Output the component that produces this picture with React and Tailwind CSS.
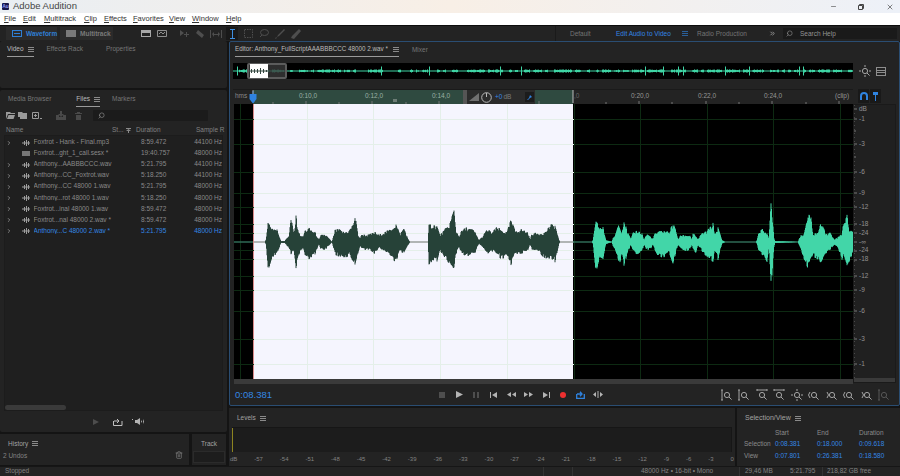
import React from "react";
import { X, Minus, Search, ChevronRight, ChevronsRight, Trash2 } from "lucide-react";

const uiFont = "font-['Liberation_Sans',Arial,sans-serif]";

// keypoints read off the reference: [x, up, down]
const selectedClip = [
  [265, 0, 0], [266, 3, 3], [268, 21, 28], [272, 15, 17], [277, 13, 13], [281, 1, 1], [285, 1, 1], [286, 3, 3], [289, 7, 7], [291, 25, 12], [294, 8, 8], [296, 26, 28], [299, 9, 14], [303, 5, 5],
  [305, 12, 15], [309, 14, 17], [315, 10, 13], [319, 2, 2], [321, 7, 8], [324, 8, 9], [327, 6, 6], [332, 0, 0], [335, 12, 13], [339, 13, 15], [344, 10, 18], [349, 12, 13], [353, 18, 20], [355, 28, 26], [358, 8, 13], [360, 4, 4],
  [362, 8, 7], [367, 7, 8], [370, 8, 9], [375, 10, 12], [379, 7, 6], [382, 9, 9], [389, 12, 13], [396, 19, 21], [400, 8, 10], [404, 15, 12], [408, 3, 3], [410, 0, 0],
  [428, 0, 0], [429, 18, 23], [432, 18, 20], [437, 17, 20], [440, 7, 8], [445, 13, 17], [449, 17, 22], [454, 34, 28], [456, 12, 12], [459, 6, 6], [462, 12, 12], [467, 15, 15], [474, 12, 13], [479, 2, 2],
  [483, 6, 5], [487, 13, 13], [492, 10, 9], [497, 15, 13], [502, 12, 18], [507, 10, 15], [511, 23, 24], [515, 12, 13], [522, 13, 12], [528, 10, 9], [530, 2, 2], [532, 9, 8], [539, 9, 9], [545, 10, 19], [550, 17, 17], [555, 18, 20], [559, 2, 2], [560, 0, 0],
];

const idleClip = [
  [592, 0, 0], [593, 2, 2], [596, 21, 31], [600, 15, 17], [603, 15, 17], [606, 2, 2], [612, 0, 0], [613, 4, 4], [615, 7, 7], [619, 21, 23], [622, 10, 14], [624, 24, 27], [627, 11, 12], [631, 3, 3],
  [633, 9, 10], [637, 12, 13], [642, 9, 10], [644, 2, 2], [646, 7, 7], [648, 8, 8], [651, 5, 7], [653, 3, 3], [655, 9, 8], [658, 10, 15], [662, 12, 17], [667, 11, 12], [669, 10, 10], [673, 19, 22], [676, 12, 10], [678, 3, 3],
  [681, 7, 8], [685, 7, 9], [690, 7, 8], [692, 2, 2], [693, 10, 8], [696, 5, 12], [698, 3, 3], [702, 9, 9], [707, 11, 17], [713, 19, 20], [715, 8, 8], [718, 15, 18], [722, 2, 2], [725, 0, 0],
  [756, 0, 0], [757, 2, 2], [759, 11, 10], [763, 13, 15], [767, 10, 23], [769, 3, 3], [771, 41, 47], [774, 5, 5], [775, 1, 1], [798, 0, 0], [799, 3, 3], [801, 8, 8], [803, 5, 15], [808, 28, 27], [811, 25, 20], [813, 8, 15], [818, 10, 18], [822, 22, 23], [826, 8, 12], [830, 10, 8], [834, 3, 3],
  [837, 4, 4], [842, 9, 18], [843, 19, 15], [847, 27, 26], [849, 14, 20], [853, 10, 10],
];

function noise(i) {
  const s = Math.sin(i * 12.9898) * 43758.5453;
  return s - Math.floor(s);
}

// one vertical stroke per half pixel, interpolating the keypoints
function wavePath(points) {
  let d = "";
  for (let p = 0; p < points.length - 1; p++) {
    const [x0, u0, d0] = points[p];
    const [x1, u1, d1] = points[p + 1];
    for (let x = x0; x < x1; x += 0.5) {
      const t = (x - x0) / (x1 - x0);
      const col = Math.floor(x);
      const up = (u0 + (u1 - u0) * t) * (0.72 + noise(col) * 0.3);
      const down = (d0 + (d1 - d0) * t) * (0.72 + noise(col + 500) * 0.3);
      if (up > 0 || down > 0) d += `M${x} ${138 - up}V${138 + down}`;
    }
  }
  return d;
}

function overviewBars(from, to) {
  let d = "";
  for (let x = from; x < to; x += 1) {
    const gate = noise(Math.floor(x / 3) + 7);
    let a = gate < 0.35 ? 0.5 : 0.7 + noise(x) * 0.9;
    if (noise(x * 3 + 1) > 0.985) a = 4.5;
    d += `M${x + 0.5} ${8 - a}V${8 + a}`;
  }
  return d;
}

const gridRows = [15, 40, 68, 89, 103, 120, 129, 146, 155, 172, 186, 207, 235, 260];
const gridCols = [6, 73, 139, 206, 273, 340, 406, 473, 539, 606];

const dbLabels = [
  ["dB", 109], ["-1", 119], ["-3", 144], ["-6", 172], ["-9", 193], ["-12", 207], ["-18", 224], ["-24", 233],
  ["-∞", 242], ["-24", 250], ["-18", 259], ["-12", 276], ["-9", 290], ["-6", 311], ["-3", 339], ["-1", 364],
];

const files = [
  ["Foxtrot - Hank - Final.mp3", "8:59.472", "44100 Hz", false],
  ["Foxtrot...ght_1_call.sesx *", "19:40.757", "48000 Hz", false, true],
  ["Anthony...AABBBCCC.wav", "5:21.795", "44100 Hz", false],
  ["Anthony...CC_Foxtrot.wav", "5:18.250", "44100 Hz", false],
  ["Anthony...CC 48000 1.wav", "5:21.795", "48000 Hz", false],
  ["Anthony...rot 48000 1.wav", "5:18.250", "48000 Hz", false],
  ["Foxtrot...inal 48000 1.wav", "8:59.472", "48000 Hz", false],
  ["Foxtrot...nal 48000 2.wav *", "8:59.472", "48000 Hz", false],
  ["Anthony...C 48000 2.wav *", "5:21.795", "48000 Hz", true],
];

const menuItems = [
  ["F", "ile", "w-[19px]"],
  ["E", "dit", "w-[21px]"],
  ["M", "ultitrack", "w-[40px]"],
  ["C", "lip", "w-[20px]"],
  ["E", "ffects", "w-[29px]"],
  ["F", "avorites", "w-[36px]"],
  ["V", "iew", "w-[23px]"],
  ["W", "indow", "w-[34px]"],
  ["H", "elp", "w-[20px]"],
];

function Glyph({ w = 12, h = 10, vb, className = "", children }) {
  return (
    <svg width={w} height={h} viewBox={vb || `0 0 ${w} ${h}`} className={`shrink-0 ${className}`} fill="currentColor">
      {children}
    </svg>
  );
}

function MenuLines({ className = "text-[#8a8a8a]" }) {
  return (
    <Glyph w={6} h={5} className={className}>
      <path d="M0 0h6v1H0zM0 2h6v1H0zM0 4h6v1H0z" />
    </Glyph>
  );
}

function Zoomer({ kind }) {
  return (
    <svg width="12" height="12" viewBox="0 0 12 12" fill="none" stroke="#a4a4a4" strokeWidth="1" className="shrink-0">
      <circle cx="6" cy="6" r="2.6" />
      <path d="M8 8l2.6 2.6" />
      {kind === "v" && <path d="M1 1v10M0 1h2M0 11h2" />}
      {kind === "h" && <path d="M1 1h10M1 0v2M11 0v2" />}
      {kind === "all" && <path d="M6 0v2M6 10v2M0 6h2M10 6h2" />}
      {kind === "l" && <path d="M2 3L0.5 6 2 9" />}
      {kind === "r" && <path d="M1 3l1.5 3L1 9" />}
    </svg>
  );
}

function PanelTab({ label, active, menu, className = "" }) {
  return (
    <div className={`flex items-center gap-[4px] h-[14px] border-b ${active ? "border-[#9a9a9a] text-[#bcbcbc]" : "border-transparent text-[#767676]"} ${className}`}>
      <span className="text-[6.5px] leading-none whitespace-nowrap">{label}</span>
      {menu && <MenuLines />}
    </div>
  );
}

function Slot({ className = "w-[16px]", children }) {
  return <div className={`shrink-0 flex justify-center items-center ${className}`}>{children}</div>;
}

function TitleBar() {
  return (
    <div className="h-[13px] flex items-center bg-gradient-to-r from-[#e9eef3] via-[#f8efe6] to-[#edf1f8]">
      <div className="ml-[2px] w-[7px] h-[7px] rounded-[1px] bg-[#15164a] text-[#8f9cf5] text-[5px] leading-[7px] text-center font-bold">Au</div>
      <span className="ml-[4px] text-[9.5px] text-[#444]">Adobe Audition</span>
      <div className="ml-auto flex items-center text-[#444]">
        <Minus size={7} className="mr-[21px]" />
        <svg width="6" height="6" viewBox="0 0 6 6" fill="none" stroke="#444" className="mr-[22px]">
          <path d="M.5 1.5h4v4h-4zM1.5 1.5V.5h4v4h-1" />
        </svg>
        <X size={8} className="mr-[6px]" />
      </div>
    </div>
  );
}

function MenuBar() {
  return (
    <div className="h-[12px] bg-white flex items-center pl-[4px] text-[7.5px] text-[#333]">
      {menuItems.map(([u, rest, w]) => (
        <span key={u + rest} className={w}>
          <u>{u}</u>
          {rest}
        </span>
      ))}
    </div>
  );
}

function ToolBar() {
  return (
    <div className="h-[16px] bg-[#232323] border-t border-[#0c0c0c] flex items-center text-[6.5px] relative">
      <div className="ml-[6px] w-[51px] h-[13px] bg-[#2b2b2b] flex items-center pl-[6px] gap-[4px] text-[#2f7fd6] font-bold">
        <Glyph w={10} h={7}>
          <path fillRule="evenodd" d="M0 0h10v7H0zM1 1v5h8V1z" />
          <path d="M2 3h6v1H2z" />
        </Glyph>
        Waveform
      </div>
      <div className="ml-[3px] w-[53px] h-[13px] bg-[#2b2b2b] flex items-center pl-[6px] gap-[4px] text-[#7a7a7a] font-bold">
        <Glyph w={10} h={7}>
          <path d="M0 0h10v7H0z" />
        </Glyph>
        Multitrack
      </div>
      <div className="ml-[28px] flex items-center gap-[6px] text-[#a8a8a8]">
        <Glyph w={10} h={7}>
          <path fillRule="evenodd" d="M0 0h10v7H0zM1 3v3h8V3z" />
        </Glyph>
        <svg width="10" height="7" viewBox="0 0 10 7" fill="none" stroke="#8e8e8e">
          <path d="M.5.5h9v6h-9zM2 4l2-2 2 2 2-2" />
        </svg>
      </div>
      <div className="ml-[9px] flex items-center text-[#4e4e4e]">
        <Slot><Glyph w={10} h={9}><path d="M1 1l4 3-4 3zM7 3h1v2h2v1H8v2H7V6H5V5h2z" /></Glyph></Slot>
        <Slot><Glyph w={10} h={10}><path d="M3 1l6 5-2 3-6-5z" /></Glyph></Slot>
        <Slot><Glyph w={12} h={8}><path d="M0 0h1v8H0zM11 0h1v8h-1zM2 4l2-2v5zM10 4L8 2v5zM4 4h4v1H4z" /></Glyph></Slot>
        <Slot>
          <div className="w-[12px] h-[13px] bg-[#191919] flex justify-center items-center text-[#3f8ee0]">
            <Glyph w={5} h={10}><path d="M0 0h5v1H3v8h2v1H0V9h2V1H0z" /></Glyph>
          </div>
        </Slot>
        <Slot><svg width="9" height="9" viewBox="0 0 9 9" fill="none" stroke="#4e4e4e" strokeDasharray="1.5 1"><rect x=".5" y=".5" width="8" height="8" /></svg></Slot>
        <Slot><svg width="10" height="9" viewBox="0 0 10 9" fill="none" stroke="#4e4e4e"><ellipse cx="5.5" cy="3.5" rx="4" ry="3" /><path d="M3 6L1 8" /></svg></Slot>
        <Slot><Glyph w={10} h={10}><path d="M9 0l1 1-6 6-2 1 1-2zM1 8l1 1-2 1z" /></Glyph></Slot>
        <Slot><Glyph w={10} h={10}><path d="M8 0l2 2-7 8-3-1 1-2z" /></Glyph></Slot>
      </div>
      <div className="ml-auto flex items-center h-full border-l border-[#1a1a1a] pl-[14px] whitespace-nowrap">
        <span className="w-[46px] text-[#747474]">Default</span>
        <span className="text-[#3487e4] w-[66px]">Edit Audio to Video</span>
        <MenuLines className="text-[#2a5f99]" />
        <span className="ml-[9px] w-[72px] text-[#747474]">Radio Production</span>
        <ChevronsRight size={7} className="text-[#999]" strokeWidth={3} />
        <div className="ml-[7px] mr-[3px] w-[114px] h-[11px] bg-[#1a1a1a] flex items-center pl-[3px] gap-[7px] text-[#949494]">
          <Search size={7} className="-scale-x-100" />
          Search Help
        </div>
      </div>
    </div>
  );
}

function FileRow({ name, duration, rate, active, session }) {
  const tone = active ? "text-[#3487e4]" : "text-[#8a8a8a]";
  return (
    <div className={`h-[11.05px] flex items-center text-[6.5px] leading-none ${tone}`}>
      <span className="w-[20px] pl-[4px]">
        {!session && <ChevronRight size={6} className="text-[#9a9a9a]" strokeWidth={3} />}
      </span>
      <span className="w-[12px]">
        {session ? (
          <span className="block w-[8px] h-[5px] bg-[#777]" />
        ) : (
          <Glyph w={8} h={6} className="text-[#9d9d9d]">
            <path d="M0 2.5h8v1H0zM2 1h1v4H2zM4 0h1v6H4zM6 1h1v4H6z" />
          </Glyph>
        )}
      </span>
      <span className="w-[109px] whitespace-nowrap overflow-hidden">{name}</span>
      <span className="w-[54px] whitespace-nowrap">{duration}</span>
      <span className="whitespace-nowrap">{rate}</span>
    </div>
  );
}

function LeftColumn() {
  return (
    <div className="w-[228px] shrink-0 flex flex-col gap-[2px] pr-[1px]">
      <div className="h-[47px] bg-[#232323] rounded-[2px] shrink-0 pl-[7px] pt-[2px] flex gap-[13px]">
        <PanelTab label="Video" active menu />
        <PanelTab label="Effects Rack" />
        <PanelTab label="Properties" className="ml-[10px]" />
      </div>
      <div className="h-[342px] bg-[#232323] rounded-[2px] shrink-0 flex flex-col">
        <div className="flex pl-[8px] gap-[25px] h-[17px] pt-[2px] items-center">
          <PanelTab label="Media Browser" />
          <div className="flex gap-[9px]">
            <PanelTab label="Files" active menu />
            <PanelTab label="Markers" className="ml-[3px]" />
          </div>
        </div>
        <div className="h-[17px] flex items-center pl-[6px] text-[#9a9a9a]">
          <Glyph w={9} h={7}><path d="M0 0h4l1 1h4v1H2L0 7zM2.5 3H9L7.5 7H1z" /></Glyph>
          <Glyph w={10} h={8} className="ml-[3px]"><path d="M0 0h4l1 1h4v6H2V5H0z" /></Glyph>
          <svg width="10" height="8" viewBox="0 0 10 8" fill="none" stroke="#9a9a9a" className="ml-[4px]"><path d="M.5.5h6v6h-6zM2 3.5h3M3.5 2v3M8 6.5h2" /></svg>
          <Glyph w={10} h={9} className="ml-[14px] text-[#4a4a4a]"><path d="M0 4h3v2h4V4h3v5H0zM4 0h2v3h2L5 6 2 3h2z" /></Glyph>
          <Glyph w={7} h={8} className="ml-[9px] text-[#4a4a4a]"><path d="M0 1h7v1H0zM2 0h3v1H2zM1 3h5v5H1z" /></Glyph>
          <div className="ml-[11px] w-[115px] h-[11px] bg-[#1b1b1b] rounded-[1px] flex items-center pl-[5px] text-[#9a9a9a]">
            <Search size={7} className="-scale-x-100" />
          </div>
        </div>
        <div className="h-[10px] mt-[1px] flex items-center pl-[6px] text-[6.5px] text-[#828282]">
          <span className="w-[106px]">Name</span>
          <span className="w-[10px]">St...</span>
          <Glyph w={5} h={5} className="ml-[4px] mr-[5px] text-[#8a8a8a]"><path d="M0 0h5v1H0zM2.5 1L5 3H3v2H2V3H0z" /></Glyph>
          <span className="w-[60px]">Duration</span>
          <span className="whitespace-nowrap">Sample R</span>
        </div>
        <div className="mx-[4px] flex-1 bg-[#1f1f1f] border border-[#1c1c1c] overflow-hidden flex flex-col relative">
          <div className="pt-[1px] -ml-[3px]">
            {files.map((f) => (
              <FileRow key={f[0]} name={f[0]} duration={f[1]} rate={f[2]} active={f[3]} session={f[4]} />
            ))}
          </div>
          <div className="mt-auto w-[61px] h-[5px] rounded-[3px] bg-[#3a3a3a]" />
        </div>
        <div className="h-[21px] flex items-center pl-[93px] gap-[9px] text-[#b4b4b4]">
          <Glyph w={6} h={6} className="text-[#4d4d4d]"><path d="M0 0l6 3-6 3z" /></Glyph>
          <svg width="10" height="8" viewBox="0 0 10 8" fill="none" stroke="#c0c0c0" className="ml-[5px]"><path d="M.5 3v4.500h8.500V3M1 3h4M4 1l2 2-2 2" /></svg>
          <Glyph w={12} h={7}><path d="M0 1h1v1H0zM3 2h2l3-2v7L5 5H3zM9 2l1 1.500-1 1.500zM11 1l1 2.500L11 6z" /></Glyph>
        </div>
      </div>
      <div className="flex gap-[3px] h-[31px]">
        <div className="w-[189px] bg-[#232323] flex flex-col pl-[3px]">
          <div className="h-[17px] pt-[2px] pl-[5px] flex items-center gap-[4px] text-[6.5px] text-[#a2a2a2]">
            History
            <MenuLines />
          </div>
          <div className="flex-1 flex items-start justify-between pr-[6px] text-[6.5px] text-[#828282]">
            2 Undos
            <Trash2 size={8} />
          </div>
        </div>
        <div className="w-[34px] bg-[#232323] flex flex-col items-center">
          <span className="h-[17px] pt-[2px] flex items-center text-[6.5px] text-[#a2a2a2]">Track</span>
          <div className="w-[32px] h-[12px] bg-[#1d1d1d] border border-[#2b2b2b]" />
        </div>
      </div>
    </div>
  );
}

function Overview() {
  return (
    <div className="mt-[6px] h-[16px] flex items-center">
      <div className="ml-[3px] w-[620px] h-[16px] bg-black relative">
        <svg width="620" height="16" className="absolute inset-0">
          <path d={overviewBars(0, 620)} stroke="#3fd5a5" strokeWidth="1" />
        </svg>
        <div className="absolute left-[14px] top-0 w-[40px] h-[16px] bg-[#3a3a3a]/80 border-[2px] border-[#5c5c5c] rounded-[2px]" />
        <div className="absolute left-[17px] top-[1px] w-[18px] h-[14px] bg-white flex items-center">
          <svg width="18" height="14"><path d="M0 7h18" stroke="#33473f" /><path d="M1 5h1v4H1zM4 5h1v4H4zM7 5h1v4H7zM10 4h1v6h-1zM13 5h1v4h-1zM16 6h1v2h-1z" fill="#33473f" /></svg>
        </div>
      </div>
      <div className="ml-[6px]">
        <Zoomer kind="all" />
      </div>
      <svg width="10" height="9" viewBox="0 0 10 9" className="ml-[5px]"><path fillRule="evenodd" d="M0 0h10v9H0zM1 1v2h8V1zM1 4v1h8V4zM1 6v2h8V6z" fill="#8d8d8d" /></svg>
    </div>
  );
}

function TimeLabel({ className, children }) {
  return <span className={`absolute top-[1px] text-[6.5px] leading-[10px] ${className}`}>{children}</span>;
}

function Timeline() {
  return (
    <div className="mt-[10px] h-[15px] flex items-start">
      <div className="ml-[3px] w-[620px] h-[15px] flex relative bg-[#232323] border-t border-[#1a1a1a]">
        <div className="w-[20px] shrink-0" />
        <div className="w-[320px] shrink-0 bg-[#2f4a40]" />
        <span className="absolute left-[2px] top-[1px] text-[6.5px] leading-[10px] text-[#888]">hms</span>
        <TimeLabel className="left-[66px] text-[#9bb0a5]">0:10,0</TimeLabel>
        <TimeLabel className="left-[132px] text-[#9bb0a5]">0:12,0</TimeLabel>
        <TimeLabel className="left-[199px] text-[#9bb0a5]">0:14,0</TimeLabel>
        <TimeLabel className="left-[341px] text-[#666]">,0</TimeLabel>
        <TimeLabel className="left-[398px] text-[#969696]">0:20,0</TimeLabel>
        <TimeLabel className="left-[465px] text-[#969696]">0:22,0</TimeLabel>
        <TimeLabel className="left-[531px] text-[#969696]">0:24,0</TimeLabel>
        <TimeLabel className="left-[602px] text-[#969696]">(clip)</TimeLabel>
        <svg width="620" height="15" className="absolute inset-0">
          <path d="M40 12v2M73 11v3M106 12v2M139 11v3M173 12v2M206 11v3M306 11v3M373 12v2M406 11v3M439 12v2M473 11v3M506 12v2M539 11v3M573 12v2M606 11v3" stroke="#777" />
          <path d="M160 9h4v3h-4z" fill="#6d7d76" />
          <path d="M16.500 4l3 0 0 -3 1 0 0 3 3 0 0 5 -3 4 -1 0 -3 -4z" fill="#2f83e0" />
          <path d="M20 0v4" stroke="#999" />
          <path d="M340 0v13" stroke="#bbb" />
        </svg>
        <div className="absolute left-[230px] top-0 w-[72px] h-[14px] bg-[#2b2b2b] flex items-center">
          <span className="w-[4px] h-full bg-[#555]" />
          <Glyph w={10} h={8} className="ml-[2px] text-[#707070]"><path d="M0 8l10-8v8z" /></Glyph>
          <svg width="11" height="11" viewBox="0 0 11 11" fill="none" stroke="#b8b8b8" className="ml-[2px]"><circle cx="5.500" cy="5.500" r="4.800" /><path d="M5.500 1v4" /></svg>
          <span className="ml-[3px] text-[6.5px] text-[#3487e4]">+0</span>
          <span className="ml-[1px] text-[6.5px] text-[#7c7c7c]">dB</span>
          <span className="ml-[14px] w-[9px] h-[10px] bg-[#1c1c1c] flex items-center justify-center">
            <Glyph w={5} h={5} className="text-[#2f83e0]"><path d="M3 0l2 2-2 1-2 2-1 0 2-2z" /></Glyph>
          </span>
        </div>
      </div>
      <div className="ml-[5px] flex gap-[1px]">
        <span className="w-[11px] h-[14px] bg-[#191919] flex items-center justify-center">
          <svg width="8" height="8" viewBox="0 0 8 8" fill="none" stroke="#2f83e0" strokeWidth="2"><path d="M1 8V4a3 3 0 0 1 6 0v4" /></svg>
        </span>
        <span className="w-[11px] h-[14px] bg-[#191919] flex items-center justify-center">
          <Glyph w={5} h={9} className="text-[#2f83e0]"><path d="M0 0h5v3H3v6H2V3H0z" /></Glyph>
        </span>
      </div>
    </div>
  );
}

function Canvas() {
  const rows = gridRows.map((y) => `M0 ${y + 0.5}H620`).join("");
  const cols = gridCols.map((x) => `M${x + 0.5} 0V275`).join("");
  return (
    <div className="h-[280px] flex">
      <div className="ml-[4px] w-[619px] flex flex-col">
        <div className="h-[275px] flex relative bg-black">
          <div className="w-[19px] shrink-0" />
          <div className="w-[320px] shrink-0 bg-[#f5f5fe] border-l border-[#d98a8a]" />
          <svg width="619" height="275" className="absolute inset-0">
            <path d={rows + cols} stroke="#0d2a12" />
            <g style={{ clipPath: "inset(0 280px 0 20px)" }}>
              <rect x="20" y="0" width="319" height="275" fill="#f5f5fe" />
              <path d={rows + cols} stroke="#e4efe9" />
              <path d="M0 138H620" stroke="#9a9f9d" strokeWidth="1.500" />
            </g>
            <path d="M0 138H19M339 138H620" stroke="#2f6a55" strokeWidth="1.500" />
            <g transform="translate(-234 0)">
              <path d={wavePath(selectedClip)} stroke="#274239" strokeWidth="1" />
              <path d={wavePath(idleClip)} stroke="#42d6a8" strokeWidth="1" />
            </g>
          </svg>
        </div>
        <div className="h-[5px] bg-[#3a3a3a]" />
      </div>
      <div className="w-[43px] h-[279px] bg-[#202020] border border-[#1a1a1a] relative">
        <svg width="5" height="277" className="absolute left-0 top-0">
          <path d="M0 4h3M0 14h3M0 26h2M0 39h3M0 52h2M0 67h3M0 88h3M0 102h3M0 119h3M0 128h3M0 137h3M0 146h3M0 155h3M0 171h3M0 185h3M0 206h3M0 234h3M0 259h3" stroke="#777" />
          <path d="M0.500 0V275" stroke="#4a4a4a" strokeDasharray="1 3" />
        </svg>
        {dbLabels.map(([label, y], i) => (
          <span key={i} className="absolute left-[5px] text-[6.5px] leading-[8px] text-[#929292]" style={{ top: y - 109 }}>
            {label}
          </span>
        ))}
        <span className="absolute left-0 right-0 bottom-0 h-[4px] bg-[#3a3a3a]" />
      </div>
    </div>
  );
}

function Transport() {
  const mute = "text-[#4e4e4e]";
  const slot = "w-[17.4px]";
  return (
    <div className="flex-1 flex items-center relative">
      <span className="ml-[5px] text-[9.5px] leading-none text-[#3487e4]">0:08.381</span>
      <div className="absolute left-[203px] flex items-center text-[#b4b4b4]">
        <Slot className={slot}><Glyph w={6} h={6} className={mute}><path d="M0 0h6v6H0z" /></Glyph></Slot>
        <Slot className={slot}><Glyph w={7} h={7}><path d="M0 0l7 3.500L0 7z" /></Glyph></Slot>
        <Slot className={slot}><Glyph w={6} h={6} className={mute}><path d="M0 0h2v6H0zM4 0h2v6H4z" /></Glyph></Slot>
        <Slot className={slot}><Glyph w={7} h={6}><path d="M0 0h1v6H0zM7 0v6L2 3z" /></Glyph></Slot>
        <Slot className={slot}><Glyph w={9} h={5}><path d="M4 0v5L0 2.500zM9 0v5L5 2.500z" /></Glyph></Slot>
        <Slot className={slot}><Glyph w={9} h={5}><path d="M0 0v5l4-2.500zM5 0v5l4-2.500z" /></Glyph></Slot>
        <Slot className={slot}><Glyph w={7} h={6}><path d="M6 0h1v6H6zM0 0v6l5-3z" /></Glyph></Slot>
        <Slot className={slot}><Glyph w={6} h={6} className="text-[#ee3030]"><circle cx="3" cy="3" r="3" /></Glyph></Slot>
        <Slot className={slot}><svg width="9" height="8" viewBox="0 0 9 8" fill="none" stroke="#2f83e0" strokeWidth="1.300"><path d="M.7 3v4.300h7.600V3M1 3h4M4 .7l2 2.300-2 2.300" /></svg></Slot>
        <Slot className={slot}><svg width="10" height="7" viewBox="0 0 10 7" fill="#b4b4b4"><path d="M0 3.500L3 1v5zM10 3.500L7 1v5zM4.500 0h1v7h-1z" /></svg></Slot>
      </div>
      <div className="absolute left-[488px] flex items-center">
        {["v", "v", "h", "h", "all", "l", "r", "l", "r"].map((k, i) => (
          <Slot key={i} className="w-[17.5px]">
            <Zoomer kind={k} />
          </Slot>
        ))}
        <Slot className="w-[17.5px] opacity-40">
          <Zoomer kind="v" />
        </Slot>
      </div>
    </div>
  );
}

function LevelMeter() {
  const labels = ["dB", "-57", "-54", "-51", "-48", "-45", "-42", "-39", "-36", "-33", "-30", "-27", "-24", "-21", "-18", "-15", "-12", "-9", "-6", "-3", "0"];
  return (
    <div className="flex-1 bg-[#232323] flex flex-col">
      <div className="h-[19px] pt-[1px] pl-[8px] flex items-center gap-[4px] text-[6.5px] text-[#a2a2a2]">
        Levels
        <MenuLines />
      </div>
      <div className="ml-[3px] mr-[3px] h-[25px] bg-[#1c1c1c] border-t border-[#161616] border-r flex">
        <span className="w-[1px] h-full bg-[#8d8420]" />
      </div>
      <div className="mx-[1px] flex justify-between text-[6px] leading-none mt-[4px] text-[#828282]">
        {labels.map((l) => (
          <span key={l}>{l}</span>
        ))}
      </div>
    </div>
  );
}

function SelectionView() {
  const cell = "text-[#3487e4]";
  return (
    <div className="w-[163px] shrink-0 bg-[#232323] flex flex-col">
      <div className="h-[19px] pt-[1px] pl-[8px] flex items-center gap-[4px] text-[7px] text-[#a2a2a2]">
        Selection/View
        <MenuLines />
      </div>
      <div className="pl-[7px] grid grid-cols-[31px_42px_42px_42px] auto-rows-[11.5px] items-center text-[6.5px] text-[#8c8c8c]">
        <span />
        <span>Start</span>
        <span>End</span>
        <span>Duration</span>
        <span>Selection</span>
        <span className={cell}>0:08.381</span>
        <span className={cell}>0:18.000</span>
        <span className={cell}>0:09.618</span>
        <span>View</span>
        <span className={cell}>0:07.801</span>
        <span className={cell}>0:26.381</span>
        <span className={cell}>0:18.580</span>
      </div>
    </div>
  );
}

function StatusBar() {
  return (
    <div className="h-[10px] bg-[#232323] flex items-center text-[6.5px] leading-none text-[#828282] border-t border-[#161616] whitespace-nowrap">
      <span className="w-[543px] pl-[5px]">Stopped</span>
      <span className="w-[29px] h-full border-l border-[#333]" />
      <span className="w-[167px] h-full border-l border-[#333] pl-[68px] flex items-center">48000 Hz • 16-bit • Mono</span>
      <span className="w-[83px] h-full border-l border-[#333] pl-[5px] flex items-center">
        <span className="w-[45px]">29,46 MB</span>
        5:21.795
      </span>
      <span className="h-full border-l border-[#333] pl-[4px] flex items-center">218,82 GB free</span>
    </div>
  );
}

export default function App() {
  return (
    <div className={`w-[900px] h-[476px] overflow-hidden flex flex-col bg-[#141414] ${uiFont}`}>
      <TitleBar />
      <MenuBar />
      <ToolBar />
      <div className="h-[425px] flex">
        <LeftColumn />
        <div className="flex-1 flex flex-col gap-[2px] pl-[1px] min-w-0">
          <div className="h-[365px] shrink-0 bg-[#232323] border border-[#2a4d72] rounded-[2px] flex flex-col">
            <div className="h-[15px] pl-[5px] flex items-center gap-[13px]">
              <div className="flex items-center gap-[5px] h-[14px] border-b border-[#9a9a9a] text-[#bcbcbc] text-[6.3px] whitespace-nowrap">
                Editor: Anthony_FullScriptAAABBBCCC 48000 2.wav *
                <MenuLines />
              </div>
              <span className="text-[6.5px] text-[#767676]">Mixer</span>
            </div>
            <Overview />
            <Timeline />
            <Canvas />
            <Transport />
          </div>
          <div className="flex-1 flex gap-[2px]">
            <LevelMeter />
            <SelectionView />
          </div>
        </div>
      </div>
      <StatusBar />
    </div>
  );
}
